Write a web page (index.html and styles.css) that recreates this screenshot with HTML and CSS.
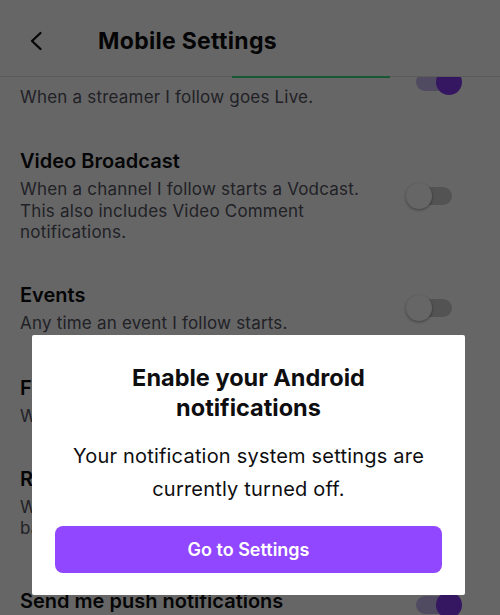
FILE: index.html
```html
<!DOCTYPE html>
<html lang="en">
<head>
<meta charset="utf-8">
<title>Mobile Settings</title>
<link rel="stylesheet" href="styles.css">
</head>
<body>
<div class="app">
  <header class="header">
    <svg class="back" width="24" height="24" viewBox="0 0 24 24" aria-hidden="true">
      <path d="M16.5 4 L8 12 L16.5 20" fill="none" stroke="#0e0e10" stroke-width="2.3" stroke-linecap="round" stroke-linejoin="round"/>
    </svg>
    <h1 class="header-title">Mobile Settings</h1>
    <span class="progress"></span>
  </header>
  <main class="scroller">
    <div class="list">
      <div class="item item-first">
        <div class="text">
          <div class="title">Live</div>
          <div class="desc">When a streamer I follow goes Live.</div>
        </div>
        <span class="toggle on"></span>
      </div>
      <div class="item">
        <div class="text">
          <div class="title">Video Broadcast</div>
          <div class="desc">When a channel I follow starts a Vodcast. This also includes Video Comment notifications.</div>
        </div>
        <span class="toggle"></span>
      </div>
      <div class="item">
        <div class="text">
          <div class="title">Events</div>
          <div class="desc">Any time an event I follow starts.</div>
        </div>
        <span class="toggle"></span>
      </div>
      <div class="item">
        <div class="text">
          <div class="title">Friend Requests</div>
          <div class="desc">When someone sends me a friend request.</div>
        </div>
        <span class="toggle"></span>
      </div>
      <div class="item">
        <div class="text">
          <div class="title">Recommendations</div>
          <div class="desc">When we recommend live channels for you based on what I watch.</div>
        </div>
        <span class="toggle"></span>
      </div>
      <div class="item item-master">
        <div class="text">
          <div class="title">Send me push notifications</div>
        </div>
        <span class="toggle on"></span>
      </div>
    </div>
  </main>
</div>

<div class="overlay">
  <div class="modal" role="dialog">
    <h2 class="modal-title">Enable your Android notifications</h2>
    <p class="modal-body">Your notification system settings are currently turned off.</p>
    <button class="modal-button" type="button">Go to Settings</button>
  </div>
</div>
</body>
</html>
```
FILE: styles.css
```css
html, body {
  margin: 0;
  padding: 0;
  background: #ffffff;
}

body {
  font-family: Inter, "Noto Sans", "Liberation Sans", sans-serif;
  color: #0e0e10;
  width: 500px;
  height: 615px;
  overflow: hidden;
}

.app {
  display: flex;
  flex-direction: column;
  height: 615px;
}

.header {
  position: relative;
  z-index: 1;
  flex: 0 0 77px;
  height: 77px;
  box-sizing: border-box;
  background: #ffffff;
  border-bottom: 1px solid #e3e3e3;
  display: flex;
  align-items: center;
  gap: 50px;
  padding: 6px 0 0 24px;
}

.back {
  display: block;
  flex-shrink: 0;
}

.header-title {
  margin: 0;
  font-size: 23px;
  line-height: 28px;
  font-weight: 700;
  letter-spacing: 0.3px;
}

.progress {
  position: absolute;
  left: 232px;
  bottom: -2px;
  width: 158px;
  height: 2px;
  background: #3ddc84;
}

.scroller {
  flex: 1 1 auto;
  min-height: 0;
  overflow: hidden;
}

.list {
  margin-top: -44px;
}

.item {
  display: flex;
  align-items: center;
  gap: 26px;
  min-height: 93px;
  box-sizing: border-box;
  padding: 19px 38px 17px 20px;
}

.item-first {
  min-height: 96px;
}

.item-master {
  align-items: flex-start;
  min-height: 0;
  padding-top: 31px;
}

.item-master .toggle {
  margin-top: 4px;
}

.text {
  flex: 1 1 auto;
  min-width: 0;
}

.title {
  font-size: 20px;
  line-height: 26px;
  font-weight: 600;
  margin-bottom: 5px;
  color: #0e0e10;
}

.item-master .title {
  margin-bottom: 0;
}

.desc {
  font-size: 17px;
  line-height: 21.5px;
  letter-spacing: 0.2px;
  color: #53535f;
}

.toggle {
  position: relative;
  flex: 0 0 56px;
  width: 56px;
  height: 26px;
}

.toggle::before {
  content: "";
  position: absolute;
  left: 10px;
  right: 10px;
  top: 4px;
  height: 18px;
  border-radius: 9px;
  background: #cfcfd3;
}

.toggle::after {
  content: "";
  position: absolute;
  left: 0;
  top: 0;
  width: 26px;
  height: 26px;
  border-radius: 50%;
  background: #ffffff;
  box-shadow: 0 1px 3px rgba(0, 0, 0, 0.4);
}

.toggle.on::before {
  background: #cbbcf2;
}

.toggle.on::after {
  left: 30px;
  background: #8437f2;
  box-shadow: none;
}

.overlay {
  position: fixed;
  inset: 0;
  z-index: 2;
  background: rgba(0, 0, 0, 0.6);
}

.modal {
  width: 433px;
  box-sizing: border-box;
  margin: 335px 0 0 32px;
  padding: 28px 23px 22px;
  background: #ffffff;
  border-radius: 2px;
  text-align: center;
}

.modal-title {
  max-width: 300px;
  margin: 0 auto 17px;
  font-size: 23.5px;
  line-height: 30px;
  font-weight: 700;
  color: #0e0e10;
}

.modal-body {
  margin: 0 0 19.5px;
  font-size: 20px;
  line-height: 33px;
  letter-spacing: 0.2px;
  color: #0e0e10;
}

.modal-button {
  display: block;
  width: 100%;
  height: 47px;
  border: none;
  border-radius: 8px;
  background: #9147ff;
  color: #ffffff;
  font-family: inherit;
  font-size: 18px;
  font-weight: 600;
  padding: 0;
}
```
